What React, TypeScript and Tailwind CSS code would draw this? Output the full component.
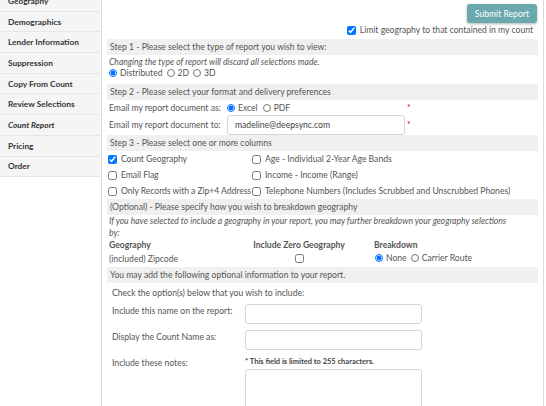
import React from "react";

const navItems = [
  "Geography",
  "Demographics",
  "Lender Information",
  "Suppression",
  "Copy From Count",
  "Review Selections",
  "Count Report",
  "Pricing",
  "Order",
];

const Band = ({ children }: { children: React.ReactNode }) => (
  <div className="h-[16px] bg-[#f0f0f0] flex items-center px-[3px] text-[#555]">{children}</div>
);

const Check = ({ checked = false }: { checked?: boolean }) => (
  <input type="checkbox" defaultChecked={checked} className="w-[9px] h-[9px] m-0 mr-[4px] shrink-0" />
);

const Radio = ({ checked = false, name }: { checked?: boolean; name: string }) => (
  <input type="radio" name={name} defaultChecked={checked} className="w-[8px] h-[8px] m-0 mr-[3px] shrink-0" />
);

const Field = () => (
  <div className="w-[177px] h-[20px] border border-[#d6d6d6] rounded-[3px] bg-white" />
);

export default function App() {
  return (
    <div
      className="w-[546px] h-[406px] overflow-hidden bg-white flex text-[8.6px] leading-[12px] text-[#555]"
      style={{ fontFamily: "Lato, 'Liberation Sans', sans-serif" }}
    >
      {/* Sidebar */}
      <div className="w-[100px] shrink-0 self-start -mt-[9px] bg-[#f5f5f5]">
        {navItems.map((item) => (
          <div
            key={item}
            className={`h-[20.7px] flex items-center pl-[8px] border-b border-[#e6e6e6] font-bold text-[8.3px] text-[#333] ${
              item === "Count Report" ? "italic" : ""
            }`}
          >
            {item}
          </div>
        ))}
      </div>

      {/* Main panel */}
      <div className="ml-[1px] w-[443px] shrink-0 border-x border-[#dcdcdc] px-[5px]">
        <div className="flex justify-end pt-[4px] pr-[1px]">
          <button className="h-[19px] px-[8px] bg-[#6aa9ad] text-white rounded-[3px] shadow-[0_1px_3px_rgba(0,0,0,0.3)]">
            Submit Report
          </button>
        </div>
        <div className="flex items-center justify-end h-[14px] pr-[5px]">
          <Check checked />
          <span>Limit geography to that contained in my count</span>
        </div>

        <div className="mt-[2px]">
          <Band>Step 1 - Please select the type of report you wish to view:</Band>
        </div>
        <div className="pl-[2px] italic h-[13px] flex items-center">
          Changing the type of report will discard all selections made.
        </div>
        <div className="pl-[2px] flex items-center h-[10px]">
          <Radio name="type" checked />
          <span className="mr-[4px]">Distributed</span>
          <Radio name="type" />
          <span className="mr-[4px]">2D</span>
          <Radio name="type" />
          <span>3D</span>
        </div>

        <div className="mt-[6px]">
          <Band>Step 2 - Please select your format and delivery preferences</Band>
        </div>
        <div className="flex items-center h-[15px] pl-[2px]">
          <span className="w-[118px]">Email my report document as:</span>
          <div className="w-[179px] flex items-center">
            <Radio name="fmt" checked />
            <span className="mr-[5px]">Excel</span>
            <Radio name="fmt" />
            <span>PDF</span>
          </div>
          <span className="ml-[1px] text-red-600">*</span>
        </div>
        <div className="flex items-center h-[20px] pl-[2px]">
          <span className="w-[118px]">Email my report document to:</span>
          <div className="w-[178px] h-[20px] border border-[#d6d6d6] rounded-[3px] flex items-center px-[7px] text-[#444]">
            madeline@deepsync.com
          </div>
          <span className="ml-[2px] text-red-600">*</span>
        </div>

        <Band>Step 3 - Please select one or more columns</Band>
        <div className="grid grid-cols-[144px_1fr] pl-[1px]">
          {[
            ["Count Geography", "Age - Individual 2-Year Age Bands", true],
            ["Email Flag", "Income - Income (Range)", false],
            ["Only Records with a Zip+4 Address", "Telephone Numbers (Includes Scrubbed and Unscrubbed Phones)", false],
          ].map(([a, b, c]) => (
            <React.Fragment key={a as string}>
              <div className="flex items-center h-[16px]">
                <Check checked={c as boolean} />
                <span className="whitespace-nowrap tracking-[-0.05px]">{a}</span>
              </div>
              <div className="flex items-center h-[16px]">
                <Check />
                <span className="whitespace-nowrap">{b}</span>
              </div>
            </React.Fragment>
          ))}
        </div>

        <Band>(Optional) - Please specify how you wish to breakdown geography</Band>
        <div className="pl-[2px] italic">
          If you have selected to include a geography in your report, you may further breakdown your geography selections
          <br />
          by:
        </div>
        <div className="grid grid-cols-[135px_110px_1fr] pl-[2px]">
          <div className="font-bold h-[11px] flex items-center">Geography</div>
          <div className="font-bold h-[11px] flex items-center justify-center">Include Zero Geography</div>
          <div className="font-bold h-[11px] flex items-center pl-[20px]">Breakdown</div>
          <div className="h-[17px] flex items-center">(included) Zipcode</div>
          <div className="h-[17px] flex items-center justify-center">
            <input type="checkbox" className="w-[9px] h-[9px] m-0" />
          </div>
          <div className="h-[16px] flex items-center pl-[21px]">
            <Radio name="bd" checked />
            <span className="mr-[4px]">None</span>
            <Radio name="bd" />
            <span>Carrier Route</span>
          </div>
        </div>

        <Band>You may add the following optional information to your report.</Band>
        <div className="pl-[5px]">
          <div className="h-[20px] flex items-center">Check the option(s) below that you wish to include:</div>
          <div className="flex items-start h-[26px] mt-[1px]">
            <span className="w-[133px] mt-[1px]">Include this name on the report:</span>
            <Field />
          </div>
          <div className="flex items-start h-[26px]">
            <span className="w-[133px] mt-[1px]">Display the Count Name as:</span>
            <Field />
          </div>
          <div className="flex items-start">
            <span className="w-[133px] mt-[1px]">Include these notes:</span>
            <div className="flex flex-col">
              <span className="font-bold text-[7.5px] text-[#444] leading-[12px]">* This field is limited to 255 characters.</span>
              <div className="w-[177px] h-[60px] border border-[#d6d6d6] rounded-[3px] mt-[1px]" />
            </div>
          </div>
        </div>
      </div>
    </div>
  );
}
